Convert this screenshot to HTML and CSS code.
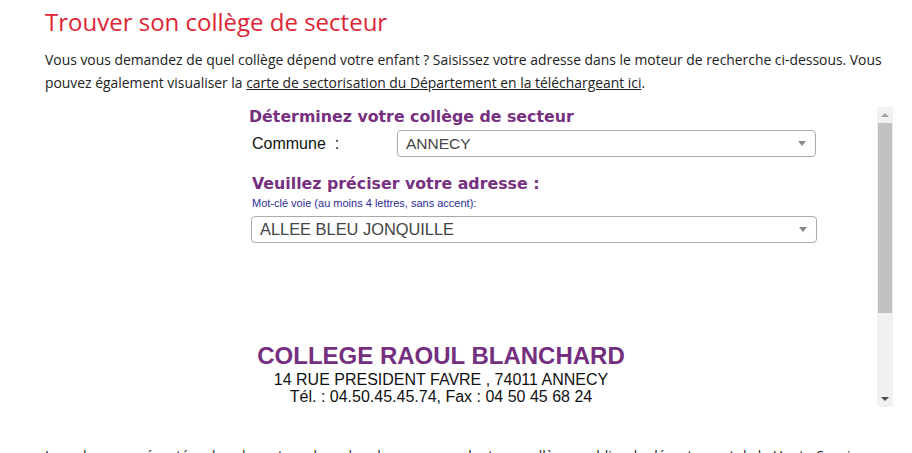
FILE: index.html
```html
<!DOCTYPE html>
<html lang="fr">
<head>
    <meta charset="UTF-8">
    <meta name="viewport" content="width=device-width, initial-scale=1.0">
    <title>Trouver son collège de secteur</title>
    <link rel="stylesheet" href="styles.css">
</head>
<body>
    <div class="page">
        <h1>Trouver son collège de secteur</h1>

        <p class="intro">Vous vous demandez de quel collège dépend votre enfant ? Saisissez votre adresse dans le moteur de recherche ci-dessous. Vous pouvez également visualiser la <a href="#">carte de sectorisation du Département en la téléchargeant ici</a>.</p>

        <div class="frame">
            <div class="frame-content">
                <h2>Déterminez votre collège de secteur</h2>

                <div class="row">
                    <span class="row-label">Commune &nbsp;:</span>
                    <div class="select select-commune">
                        <span class="select-value">ANNECY</span>
                        <b class="select-arrow"></b>
                    </div>
                </div>

                <h3>Veuillez préciser votre adresse :</h3>
                <div class="hint">Mot-clé voie (au moins 4 lettres, sans accent):</div>
                <div class="select select-voie">
                    <span class="select-value">ALLEE BLEU JONQUILLE</span>
                    <b class="select-arrow"></b>
                </div>

                <div class="result">
                    <div class="result-name">COLLEGE RAOUL BLANCHARD</div>
                    <div class="result-line">14 RUE PRESIDENT FAVRE , 74011 ANNECY</div>
                    <div class="result-line">Tél. : 04.50.45.45.74, Fax : 04 50 45 68 24</div>
                </div>
            </div>

            <div class="scrollbar">
                <span class="scroll-btn up"></span>
                <div class="scroll-track">
                    <div class="scroll-thumb"></div>
                </div>
                <span class="scroll-btn down"></span>
            </div>
        </div>

        <p class="intro">Les adresses présentées dans le moteur de recherche correspondent aux collèges publics du département de la Haute-Savoie.</p>
    </div>
</body>
</html>
```

FILE: styles.css
```css
* {
    margin: 0;
    padding: 0;
    box-sizing: border-box;
}

body {
    font-family: 'Open Sans', 'Noto Sans', Arial, sans-serif;
    background: #fff;
    color: #222;
}

.page {
    padding: 6px 20px 0 45px;
}

h1 {
    color: #dc2535;
    font-size: 24px;
    font-weight: 400;
    line-height: 32px;
    margin-bottom: 10px;
}

.intro {
    font-size: 13.9px;
    line-height: 23px;
}

.intro a {
    color: #222;
    text-decoration: underline;
}

/* embedded search tool */
.frame {
    display: flex;
    width: 645px;
    height: 300px;
    margin: 13px 0 37px 203px;
}

.frame-content {
    flex: 1;
    overflow: hidden;
    padding: 1px 0 0 1px;
    font-family: Arial, 'Liberation Sans', sans-serif;
}

h2, h3 {
    font-family: Verdana, 'DejaVu Sans', sans-serif;
    font-weight: 700;
    color: #772f80;
}

h2 {
    font-size: 15.8px;
    line-height: 18px;
}

h3 {
    font-size: 15.8px;
    line-height: 20px;
    margin: 17px 0 0 3px;
}

.row {
    display: flex;
    align-items: center;
    margin: 4px 0 0 3px;
}

.row-label {
    width: 145px;
    font-size: 16px;
    color: #111;
}

.select {
    display: flex;
    align-items: center;
    justify-content: space-between;
    height: 27px;
    border: 1px solid #aaa;
    border-radius: 4px;
    background: #fff;
    padding: 0 8px;
}

.select-commune {
    width: 419px;
}

.select-voie {
    width: 566px;
    margin: 7px 0 0 2px;
}

.select-value {
    font-size: 15.5px;
    color: #444;
}

.select-voie .select-value {
    font-size: 16.4px;
}

.select-arrow {
    border-style: solid;
    border-color: #888 transparent transparent transparent;
    border-width: 5px 4px 0 4px;
    margin-right: 1px;
}

.hint {
    font-size: 11px;
    color: #2b2b9a;
    margin: 3px 0 0 3px;
}

.result {
    width: 384px;
    margin-top: 98px;
    text-align: center;
}

.result-name {
    font-size: 24px;
    font-weight: 700;
    color: #742f7f;
    line-height: 30px;
}

.result-line {
    font-size: 16px;
    color: #111;
    line-height: 17px;
}

/* frame scrollbar */
.scrollbar {
    width: 16px;
    display: flex;
    flex-direction: column;
    background: #f1f1f1;
}

.scroll-btn {
    height: 16px;
    display: flex;
    align-items: center;
    justify-content: center;
}

.scroll-btn::before {
    content: "";
    border-style: solid;
    border-color: transparent;
    border-width: 4px;
}

.scroll-btn.up::before {
    border-bottom-color: #a3a3a3;
    border-top-width: 0;
}

.scroll-btn.down::before {
    border-top-color: #505050;
    border-bottom-width: 0;
}

.scroll-track {
    flex: 1;
}

.scroll-thumb {
    height: 190px;
    margin: 0 1px;
    background: #c1c1c1;
}
```
